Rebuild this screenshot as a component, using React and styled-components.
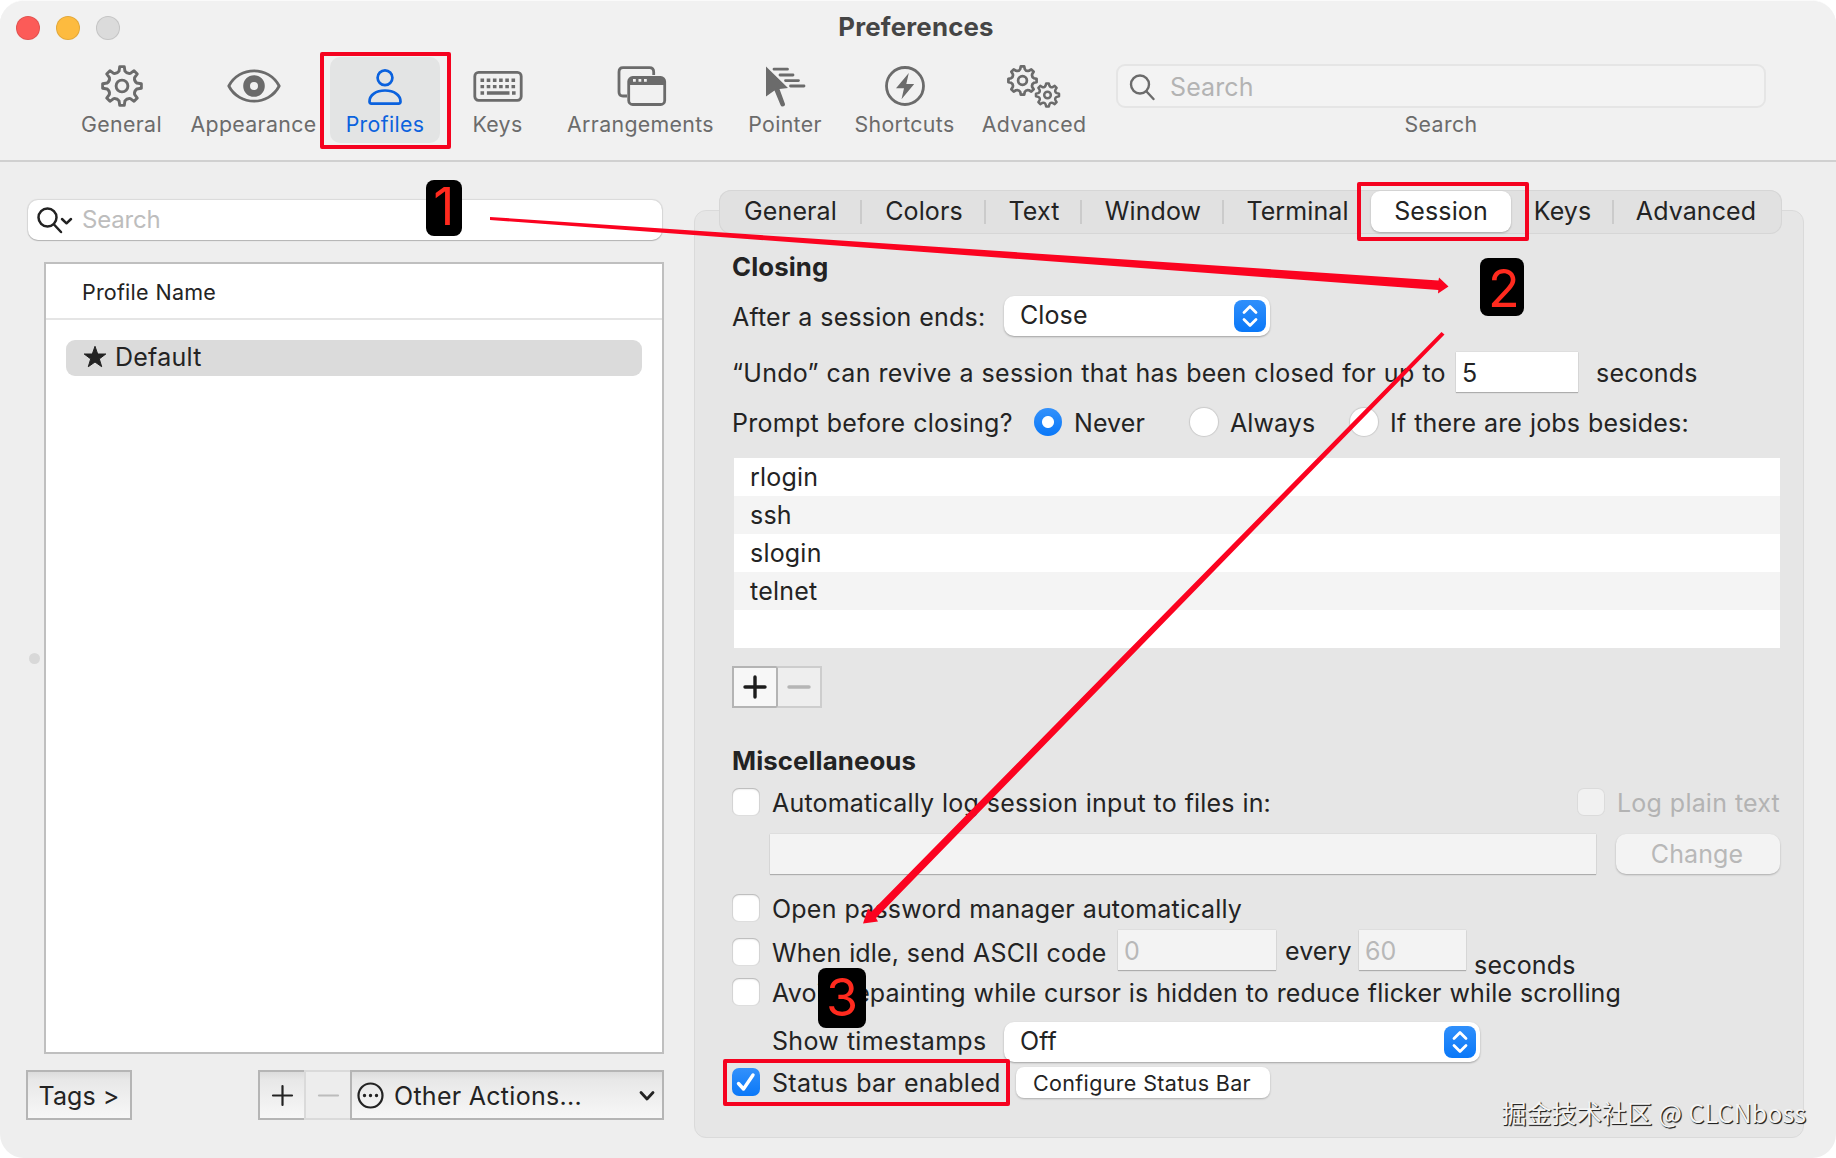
import React from 'react';
import styled, { createGlobalStyle, css } from 'styled-components';

const GlobalStyle = createGlobalStyle`
    * {
        box-sizing: border-box;
    }

    body {
        margin: 0;
        background: #fff;
        font-family: Inter, "Liberation Sans", "Noto Sans CJK SC", sans-serif;
        font-size: 25px;
        letter-spacing: 0.1px;
        word-spacing: 0.6px;
        color: #232323;
    }
`

const Window = styled.div`
    position: relative;
    display: flex;
    flex-direction: column;
    width: 1836px;
    height: 1158px;
    border-top: 1px solid #fafafa;
    border-radius: 24px;
    background: #eeeeee;
    overflow: hidden;
    white-space: nowrap;
`

/* header */
const Header = styled.header`
    height: 161px;
    background: #f1f1f1;
    border-bottom: 2px solid #d0d0d0;
`
const TitleBar = styled.div`
    display: grid;
    grid-template-columns: 1fr auto 1fr;
    align-items: center;
    height: 54px;
    padding: 0 20px 0 16px;

    h1 {
        margin: 0;
        padding-bottom: 4px;
        font-size: 25.8px;
        font-weight: 700;
        letter-spacing: 0.2px;
        color: #454545;
    }
`
const Lights = styled.div`
    display: flex;
    gap: 16px;
`
const Light = styled.span`
    width: 24px;
    height: 24px;
    border-radius: 50%;
    border: 1px solid rgba(0, 0, 0, 0.1);
    background: ${props => props.$color};
`
const Toolbar = styled.nav`
    display: flex;
    padding: 2px 0 0 60px;
`
const Tool = styled.div`
    display: flex;
    flex-direction: column;
    align-items: center;
    width: ${props => props.$width}px;
    height: 86px;
    padding-top: 7px;
    border-radius: 10px;
    color: #6b6b6b;

    ${props => props.$active && css`
        margin: 0 1px 0 6px;
        background: #e3e4e4;
        color: #0b62de;
    `}

    svg {
        display: block;
        width: 60px;
        height: 44px;
    }
`
const ToolLabel = styled.span`
    margin-top: 2px;
    font-size: 21.3px;
    line-height: 28px;
    letter-spacing: 0.35px;
`
const ToolSearch = styled.div`
    display: flex;
    flex-direction: column;
    align-items: center;
    width: 650px;
    margin-left: 14px;
    padding-top: 7px;
    color: #6b6b6b;
`
const SearchBox = styled.div`
    display: flex;
    align-items: center;
    gap: 14px;
    width: 100%;
    height: 44px;
    padding: 1px 0 0 11px;
    border: 2px solid #e5e5e5;
    border-radius: 9px;
    background: #f3f3f3;
    color: #b3b3b3;
`

/* body */
const Body = styled.main`
    display: flex;
    flex: 1;
`
const Side = styled.section`
    display: flex;
    flex-direction: column;
    width: 694px;
    padding-top: 38px;
`
const SideSearch = styled.div`
    display: flex;
    align-items: center;
    gap: 9px;
    width: 634px;
    height: 40px;
    margin-left: 28px;
    padding: 0 0 1px 9px;
    border-radius: 10px;
    background: #fff;
    box-shadow: 0 0 1px 1px rgba(0, 0, 0, 0.09), 0 1px 1px 0 rgba(0, 0, 0, 0.18);
    color: #bdbdbd;
    font-size: 24px;
    letter-spacing: -0.2px;
`
const ListArea = styled.div`
    display: flex;
    align-items: center;
    gap: 4px;
    margin-top: 22px;
    padding-left: 29px;
`
const SplitDot = styled.i`
    width: 11px;
    height: 11px;
    border-radius: 50%;
    background: #d8d8d8;
`
const ProfileList = styled.div`
    width: 620px;
    height: 792px;
    border: 2px solid #bfbfbf;
    background: #fff;
`
const ListHead = styled.div`
    display: flex;
    align-items: center;
    height: 56px;
    padding: 1px 0 0 36px;
    border-bottom: 2px solid #e5e5e5;
    font-size: 21.5px;
    letter-spacing: 0.2px;
`
const ProfileItem = styled.div`
    display: flex;
    align-items: center;
    gap: 8px;
    width: 576px;
    height: 36px;
    margin: 20px 0 0 20px;
    padding: 0 0 2px 17px;
    border-radius: 9px;
    background: #dbdbdb;
    letter-spacing: 0.25px;
`
const SideFooter = styled.div`
    display: flex;
    justify-content: space-between;
    margin: 16px 30px 0 26px;
`
const ButtonGroup = styled.div`
    display: flex;
`
const BevelButton = styled.button`
    display: flex;
    align-items: center;
    justify-content: ${props => props.$menu ? 'flex-start' : 'center'};
    gap: 10px;
    width: ${props => props.$width}px;
    height: 50px;
    margin-left: ${props => props.$joined ? -2 : 0}px;
    padding: ${props => props.$menu ? '1px 7px 0 5px' : '1px 0 0'};
    border: 2px solid #b5b5b5;
    background: linear-gradient(#dcdcdc, #e8e8e8 18%, #f7f7f7);
    font: inherit;
    letter-spacing: ${props => props.$menu ? 0.28 : 0.1}px;
    color: #232323;

    &:disabled {
        border-color: #dadada;
        background: #ededed;
        color: #bcbcbc;
    }

    .chevron {
        margin-left: auto;
    }
`

/* settings panel */
const Panel = styled.section`
    width: 1110px;
    height: 928px;
    margin-top: 48px;
    padding: 0 23px 0 37px;
    border: 1px solid #dadada;
    border-radius: 12px;
    background: #e6e6e6;
`
const Tabs = styled.div`
    display: flex;
    width: 1063px;
    height: 44px;
    margin: -21px 0 0 -13px;
    border-radius: 12px;
    background: #e1e1e1;
    box-shadow: inset 0 0 0 1px #d6d6d6;
`
const Tab = styled.div`
    display: flex;
    align-items: center;
    justify-content: center;
    width: ${props => props.$width}px;
    height: 41px;
    margin-top: 1px;
    padding-bottom: 2px;
    background: ${props => props.$line ? 'linear-gradient(#cbcbcb, #cbcbcb) no-repeat right 9px / 2px 24px' : 'none'};

    ${props => props.$active && css`
        background: #fff;
        border-radius: 9px;
        box-shadow: 0 1px 2px rgba(0, 0, 0, 0.25);
    `}
`
const Row = styled.div`
    display: flex;
    align-items: center;
    height: ${props => props.$height}px;
    margin-top: ${props => props.$top || 0}px;
    padding-left: ${props => props.$indent || 0}px;
`
const Heading = styled.h2`
    height: 30px;
    margin: ${props => props.$top}px 0 0;
    font-size: 25.8px;
    line-height: 30px;
    font-weight: 700;
`
const Text = styled.span`
    ${props => props.$width && css`width: ${props.$width}px;`}
    padding-top: ${props => props.$drop || 0}px;
    padding-bottom: ${props => props.$lift || 0}px;
    padding-left: ${props => props.$left || 0}px;
    letter-spacing: ${props => props.$spacing || 0.1}px;
    color: ${props => props.$muted ? '#b3b3b3' : 'inherit'};
`
const Select = styled.div`
    display: flex;
    align-items: center;
    justify-content: space-between;
    width: ${props => props.$width}px;
    height: 40px;
    padding: 0 4px 0 16px;
    border-radius: 10px;
    background: #fff;
    box-shadow: 0 1px 2px rgba(0, 0, 0, 0.3);

    span {
        padding-bottom: 2px;
    }
`
const Stepper = styled.i`
    display: flex;
    align-items: center;
    justify-content: center;
    width: 32px;
    height: 32px;
    border-radius: 8px;
    background: linear-gradient(#2f8ffb, #0a78f8);
`
const Field = styled.div`
    display: flex;
    align-items: center;
    width: ${props => props.$width}px;
    height: 40px;
    padding: 1px 0 0 6px;
    background: ${props => props.$disabled ? '#f3f3f3' : '#fff'};
    color: ${props => props.$disabled ? '#b8b8b8' : 'inherit'};
    box-shadow: 0 1px 1px rgba(0, 0, 0, 0.22), 0 0 1px rgba(0, 0, 0, 0.2);
`
const Radio = styled.i`
    width: 28px;
    height: 28px;
    margin-right: 12px;
    border-radius: 50%;
    background: ${props => props.$on ? 'radial-gradient(circle, #fff 5.5px, transparent 6.5px), linear-gradient(#3391fb, #0a78f8)' : '#fff'};
    box-shadow: 0 0 1px 1px rgba(0, 0, 0, ${props => props.$on ? 0 : 0.12});
`
const Check = styled.i`
    display: flex;
    align-items: center;
    justify-content: center;
    flex: none;
    width: 28px;
    height: 28px;
    margin-top: ${props => props.$drop || 0}px;
    margin-right: 12px;
    border-radius: 7px;
    background: ${props => props.$on ? 'linear-gradient(#3391fb, #0a78f8)' : props.$disabled ? '#f1f1f1' : '#fff'};
    box-shadow: ${props => {
        if (props.$on) return 'none';
        if (props.$disabled) return 'inset 0 0 0 1px rgba(0, 0, 0, 0.09)';
        return 'inset 0 0 0 1px rgba(0, 0, 0, 0.12), inset 0 1px 2px rgba(0, 0, 0, 0.2)';
    }};
`
const JobList = styled.ul`
    width: 1046px;
    height: 190px;
    margin: 16px 0 0 2px;
    padding: 0;
    list-style: none;
    background: #fff;

    li {
        height: 38px;
        padding-left: 16px;
        line-height: 38px;
        letter-spacing: 0.2px;
    }

    li:nth-child(even) {
        background: #f4f4f4;
    }
`
const SquareButton = styled.button`
    display: flex;
    align-items: center;
    justify-content: center;
    width: 46px;
    height: 42px;
    margin-right: -2px;
    padding: 0;
    border: 2px solid #b4b4b4;
    background: #f7f7f7;
    color: #1c1c1c;

    &:disabled {
        border-color: #cdcdcd;
        border-left-color: #b4b4b4;
        background: #eeeeee;
        color: #b5b5b5;
    }
`
const PushButton = styled.button`
    width: ${props => props.$width}px;
    height: ${props => props.$small ? 31 : 40}px;
    margin-left: ${props => props.$left}px;
    padding: ${props => props.$small ? '1px 2px 0 0' : '0 2px 0 0'};
    border: 0;
    border-radius: ${props => props.$small ? 8 : 10}px;
    background: #fff;
    box-shadow: 0 1px 2px rgba(0, 0, 0, 0.25);
    font: inherit;
    font-size: ${props => props.$small ? 21.5 : 25}px;
    letter-spacing: ${props => props.$small ? 0.35 : 0.1}px;
    color: #232323;

    &:disabled {
        background: #f3f3f3;
        color: #b8b8b8;
    }
`

/* markers lying over the window */
const Frame = styled.div`
    position: absolute;
    left: ${props => props.$x}px;
    top: ${props => props.$y}px;
    width: ${props => props.$w}px;
    height: ${props => props.$h}px;
    border: 4px solid #f5021f;
    border-radius: 2px;
`
const Badge = styled.div`
    position: absolute;
    left: ${props => props.$x}px;
    top: ${props => props.$y}px;
    width: ${props => props.$w}px;
    height: ${props => props.$h}px;
    padding-left: ${props => props.$shift || 0}px;
    border-radius: 8px;
    background: #000;
    color: #ff2a1e;
    font-size: 52px;
    line-height: ${props => props.$line}px;
    text-align: center;
`
const Arrows = styled.svg`
    position: absolute;
    left: 0;
    top: -1px;
    width: 1836px;
    height: 1158px;
    fill: #fb0320;
`
const Watermark = styled.div`
    position: absolute;
    right: 30px;
    bottom: 28px;
    font-family: "Noto Sans CJK SC", sans-serif;
    font-size: 25px;
    line-height: 36px;
    color: #f4f4f4;
    text-shadow: 1px 1px 1px #222, 1px 1px 0 #444;
`

// outline of a cog with rounded teeth
const cogPath = (cx, cy, outer, inner, teeth) => {
    const step = Math.PI * 2 / teeth;
    const at = (r, a) => `${(cx + r * Math.sin(a)).toFixed(2)} ${(cy - r * Math.cos(a)).toFixed(2)}`;
    let d = '';
    for (let i = 0; i < teeth; i++) {
        const a = i * step;
        d += `${i ? 'L' : 'M'}${at(outer, a - step * 0.15)}L${at(outer, a + step * 0.15)}`;
        d += `L${at(inner + 0.9, a + step * 0.25)}Q${at(inner - 1.2, a + step * 0.5)} ${at(inner + 0.9, a + step * 0.75)}`;
    }
    return d + 'Z';
}

const Cog = ({ cx, cy, outer, inner, hole, width }) => (
    <g fill="none" stroke="currentColor" strokeWidth={width} strokeLinejoin="round">
        <path d={cogPath(cx, cy, outer, inner, 8)}/>
        <circle cx={cx} cy={cy} r={hole}/>
    </g>
)

const icons = {
    General: <Cog cx={30} cy={22} outer={19.5} inner={14.2} hole={5.9} width={2.9}/>,
    Appearance: (
        <>
            <path d="M4.8 22C10 12 20 6.800 30 6.800s20 5.200 25.200 15.200C50 32 40 37.200 30 37.200S10 32 4.800 22Z" fill="none" stroke="currentColor" strokeWidth="2.8" strokeLinejoin="round"/>
            <path d="M30 11.2a10.8 10.8 0 1 0 0 21.6a10.8 10.8 0 1 0 0-21.6Zm0 6.8a4 4 0 1 1 0 8a4 4 0 1 1 0-8Z" fill="currentColor" fillRule="evenodd"/>
        </>
    ),
    Profiles: (
        <g fill="none" stroke="currentColor" strokeWidth="2.7" strokeLinejoin="round">
            <circle cx="30" cy="13.8" r="7.4"/>
            <path d="M14.5 37.5C14.5 31 21 26.5 30 26.5S45.5 31 45.5 37.5Q45.5 39.6 43.5 39.6H16.5Q14.5 39.6 14.5 37.5Z"/>
        </g>
    ),
    Keys: (
        <>
            <rect x="6.8" y="8.4" width="46.4" height="28" rx="3.8" fill="none" stroke="currentColor" strokeWidth="2.8"/>
            <path d="M12.5 16.3h36M12.5 22.6h36" stroke="currentColor" strokeWidth="3.4" strokeDasharray="3.6 2.6"/>
            <path d="M12.5 29h3.6M18.9 29h22.6M44 29h3.6" stroke="currentColor" strokeWidth="3.4"/>
        </>
    ),
    Arrangements: (
        <>
            <path d="M16 32H12Q8 32 8 28V8Q8 3.7 12 3.7H38.5Q42.7 3.7 42.7 8V11" fill="none" stroke="currentColor" strokeWidth="2.8"/>
            <rect x="17.7" y="13.5" width="36" height="27" rx="4" fill="none" stroke="currentColor" strokeWidth="2.8"/>
            <path d="M17.7 21V16Q18 13.5 21 13.5H50.5Q53.7 13.5 53.7 16V21Z" fill="currentColor"/>
            <path d="M22 16.3h2.8M27.5 16.3h2.8M33 16.3h2.8" stroke="#f1f1f1" strokeWidth="2.8"/>
        </>
    ),
    Pointer: (
        <>
            <path d="M11 2.5L33 24L24.5 25L30 40Q30.2 42.3 27.5 42.5Q26 42.5 25.5 41L19.5 26.5L11 32.5Z" fill="currentColor"/>
            <path d="M19 5.2H32.5M25 11H38M30.5 16.6H43.5M35.5 22H49" stroke="currentColor" strokeWidth="2.8" strokeLinecap="round"/>
        </>
    ),
    Shortcuts: (
        <>
            <circle cx="30" cy="22" r="18.5" fill="none" stroke="currentColor" strokeWidth="2.8"/>
            <path d="M33.8 9L21 24.2H29L26.5 35.3L39.2 20H31.3Z" fill="currentColor"/>
        </>
    ),
    Advanced: (
        <>
            <Cog cx={18.5} cy={16.5} outer={14.2} inner={10.8} hole={4.4} width={2.7}/>
            <Cog cx={43.5} cy={31} outer={11.6} inner={8.7} hole={3.3} width={2.5}/>
        </>
    )
}

const Magnifier = () => (
    <svg width="27" height="28" viewBox="0 0 27 28" fill="none" stroke="#6b6b6b" strokeWidth="2.4" strokeLinecap="round">
        <circle cx="11" cy="11.5" r="9"/>
        <path d="M17.5 18.5L24.5 26"/>
    </svg>
)
const MenuMagnifier = () => (
    <svg width="36" height="28" viewBox="0 0 36 28" fill="none" stroke="#222" strokeWidth="2.5" strokeLinecap="round" strokeLinejoin="round">
        <circle cx="10.5" cy="11.5" r="9"/>
        <path d="M17 18.5L24 26M25 13L29.5 17.3L34 13"/>
    </svg>
)
const Star = () => (
    <svg width="24" height="24" viewBox="0 0 24 24" fill="#232323" stroke="#232323" strokeWidth="1" strokeLinejoin="round">
        <path d="M12 1.3L14.7 9H22.8L16.3 13.9L18.7 21.7L12 17L5.3 21.7L7.7 13.9L1.2 9H9.3Z"/>
    </svg>
)
const Sign = ({ plus, size, width }) => (
    <svg width={size} height={size} viewBox={`0 0 ${size} ${size}`} stroke="currentColor" strokeWidth={width} strokeLinecap="round">
        <path d={`M2 ${size / 2}H${size - 2}` + (plus ? `M${size / 2} 2V${size - 2}` : '')}/>
    </svg>
)
const Chevrons = () => (
    <Stepper>
        <svg width="16" height="24" viewBox="0 0 16 24" fill="none" stroke="#fff" strokeWidth="2.8" strokeLinecap="round" strokeLinejoin="round">
            <path d="M2 8.5L8 2.5L14 8.5M2 15.5L8 21.5L14 15.5"/>
        </svg>
    </Stepper>
)

const tools = [
    { name: 'General', width: 123 },
    { name: 'Appearance', width: 141 },
    { name: 'Profiles', width: 110, active: true },
    { name: 'Keys', width: 113 },
    { name: 'Arrangements', width: 173 },
    { name: 'Pointer', width: 116 },
    { name: 'Shortcuts', width: 123 },
    { name: 'Advanced', width: 136 }
]
const tabs = [
    { name: 'General', width: 143, line: true },
    { name: 'Colors', width: 124, line: true },
    { name: 'Text', width: 96, line: true },
    { name: 'Window', width: 142, line: true },
    { name: 'Terminal', width: 147 },
    { name: 'Session', width: 140, active: true },
    { name: 'Keys', width: 103, line: true },
    { name: 'Advanced', width: 164 }
]
const jobs = ['rlogin', 'ssh', 'slogin', 'telnet']

const App = () => {
    return (
        <Window>
            <GlobalStyle/>
            <Header>
                <TitleBar>
                    <Lights>
                        <Light $color="#fc5b58"/>
                        <Light $color="#fdbb3f"/>
                        <Light $color="#dbdbdb"/>
                    </Lights>
                    <h1>Preferences</h1>
                </TitleBar>
                <Toolbar>
                    {tools.map((v, i) => (
                        <Tool key={i} $width={v.width} $active={v.active}>
                            <svg viewBox="0 0 60 44">{icons[v.name]}</svg>
                            <ToolLabel>{v.name}</ToolLabel>
                        </Tool>
                    ))}
                    <ToolSearch>
                        <SearchBox><Magnifier/>Search</SearchBox>
                        <ToolLabel>Search</ToolLabel>
                    </ToolSearch>
                </Toolbar>
            </Header>
            <Body>
                <Side>
                    <SideSearch><MenuMagnifier/>Search</SideSearch>
                    <ListArea>
                        <SplitDot/>
                        <ProfileList>
                            <ListHead>Profile Name</ListHead>
                            <ProfileItem><Star/>Default</ProfileItem>
                        </ProfileList>
                    </ListArea>
                    <SideFooter>
                        <BevelButton $width={106}>Tags &gt;</BevelButton>
                        <ButtonGroup>
                            <BevelButton $width={48}><Sign plus size={23} width={2.2}/></BevelButton>
                            <BevelButton $width={48} $joined disabled><Sign size={23} width={2.2}/></BevelButton>
                            <BevelButton $width={314} $joined $menu>
                                <svg width="27" height="27" viewBox="0 0 27 27" fill="none" stroke="#232323" strokeWidth="2.2">
                                    <circle cx="13.5" cy="13.5" r="12"/>
                                    <path d="M7.5 13.5h.01M13.5 13.5h.01M19.5 13.5h.01" strokeWidth="3.4" strokeLinecap="round"/>
                                </svg>
                                Other Actions...
                                <svg className="chevron" width="16" height="12" viewBox="0 0 16 12" fill="none" stroke="#232323" strokeWidth="2.8" strokeLinecap="round" strokeLinejoin="round">
                                    <path d="M2 2.5L8 9L14 2.5"/>
                                </svg>
                            </BevelButton>
                        </ButtonGroup>
                    </SideFooter>
                </Side>
                <Panel>
                    <Tabs>
                        {tabs.map((v, i) => (
                            <Tab key={i} $width={v.width} $line={v.line} $active={v.active}>{v.name}</Tab>
                        ))}
                    </Tabs>
                    <Heading $top={18}>Closing</Heading>
                    <Row $top={14} $height={40}>
                        <Text $width={272} $drop={2} $spacing={0.18}>After a session ends:</Text>
                        <Select $width={266}><span>Close</span><Chevrons/></Select>
                    </Row>
                    <Row $top={16} $height={40}>
                        <Text $width={724} $drop={2} $spacing={0.265}>“Undo” can revive a session that has been closed for up to</Text>
                        <Field $width={122}>5</Field>
                        <Text $left={18} $drop={2} $spacing={0.2}>seconds</Text>
                    </Row>
                    <Row $top={10} $height={40}>
                        <Text $width={302} $drop={2} $spacing={0.26}>Prompt before closing?</Text>
                        <Radio $on/>
                        <Text $width={116} $drop={2}>Never</Text>
                        <Radio/>
                        <Text $width={120} $drop={2}>Always</Text>
                        <Radio/>
                        <Text $drop={2} $spacing={0.18}>If there are jobs besides:</Text>
                    </Row>
                    <JobList>
                        {jobs.map((v, i) => <li key={i}>{v}</li>)}
                    </JobList>
                    <Row $top={18} $height={42}>
                        <SquareButton><Sign plus size={24} width={3.4}/></SquareButton>
                        <SquareButton disabled><Sign size={24} width={3.4}/></SquareButton>
                    </Row>
                    <Heading $top={38}>Miscellaneous</Heading>
                    <Row $top={12} $height={28}>
                        <Check/>
                        <Text $width={807} $drop={2} $spacing={0.175}>Automatically log session input to files in:</Text>
                        <Check $disabled/>
                        <Text $muted $drop={2} $spacing={0.2}>Log plain text</Text>
                    </Row>
                    <Row $top={16} $height={44} $indent={38}>
                        <Field $width={826} $disabled/>
                        <PushButton $width={164} $left={20} disabled>Change</PushButton>
                    </Row>
                    <Row $top={18} $height={28}>
                        <Check/>
                        <Text $drop={2} $spacing={0.21}>Open password manager automatically</Text>
                    </Row>
                    <Row $top={8} $height={40}>
                        <Check $drop={4}/>
                        <Text $width={346} $drop={5} $spacing={0.15}>When idle, send ASCII code</Text>
                        <Field $width={158} $disabled>0</Field>
                        <Text $width={83} $left={9} $drop={1}>every</Text>
                        <Field $width={107} $disabled>60</Field>
                        <Text $left={8} $drop={29} $spacing={0.2}>seconds</Text>
                    </Row>
                    <Row $top={8} $height={28}>
                        <Check/>
                        <Text $drop={2} $spacing={0.15}>Avoid repainting while cursor is hidden to reduce flicker while scrolling</Text>
                    </Row>
                    <Row $top={16} $height={40} $indent={40}>
                        <Text $width={232} $lift={2} $spacing={0.29}>Show timestamps</Text>
                        <Select $width={476}><span>Off</span><Chevrons/></Select>
                    </Row>
                    <Row $top={4} $height={32}>
                        <Check $on>
                            <svg width="20" height="20" viewBox="0 0 20 20" fill="none" stroke="#fff" strokeWidth="3.4" strokeLinecap="round" strokeLinejoin="round">
                                <path d="M2.5 11.5L7.5 17L17 3"/>
                            </svg>
                        </Check>
                        <Text $width={228} $drop={2} $spacing={0.29}>Status bar enabled</Text>
                        <PushButton $width={254} $left={16} $small>Configure Status Bar</PushButton>
                    </Row>
                </Panel>
            </Body>

            <Frame $x={320} $y={51} $w={131} $h={97}/>
            <Frame $x={1357} $y={181} $w={172} $h={59}/>
            <Frame $x={723} $y={1058} $w={287} $h={47}/>
            <Arrows viewBox="0 0 1836 1158">
                <path d="M490 217L1438.5 280.5L1439 277.5L1448.5 286.5L1438 293.5L1438.3 290L490 220Z"/>
                <path d="M1441.5 332L1444.5 334.5L876 918L878 921.5L863 923.5L868 908.5L871 912Z"/>
            </Arrows>
            <Badge $x={426} $y={179} $w={36} $h={56} $line={54}>1</Badge>
            <Badge $x={1480} $y={257} $w={44} $h={58} $line={61} $shift={4}>2</Badge>
            <Badge $x={818} $y={967} $w={48} $h={60} $line={60}>3</Badge>
            <Watermark>掘金技术社区 @ CLCNboss</Watermark>
        </Window>
    );
};

export default React.memo(App);
